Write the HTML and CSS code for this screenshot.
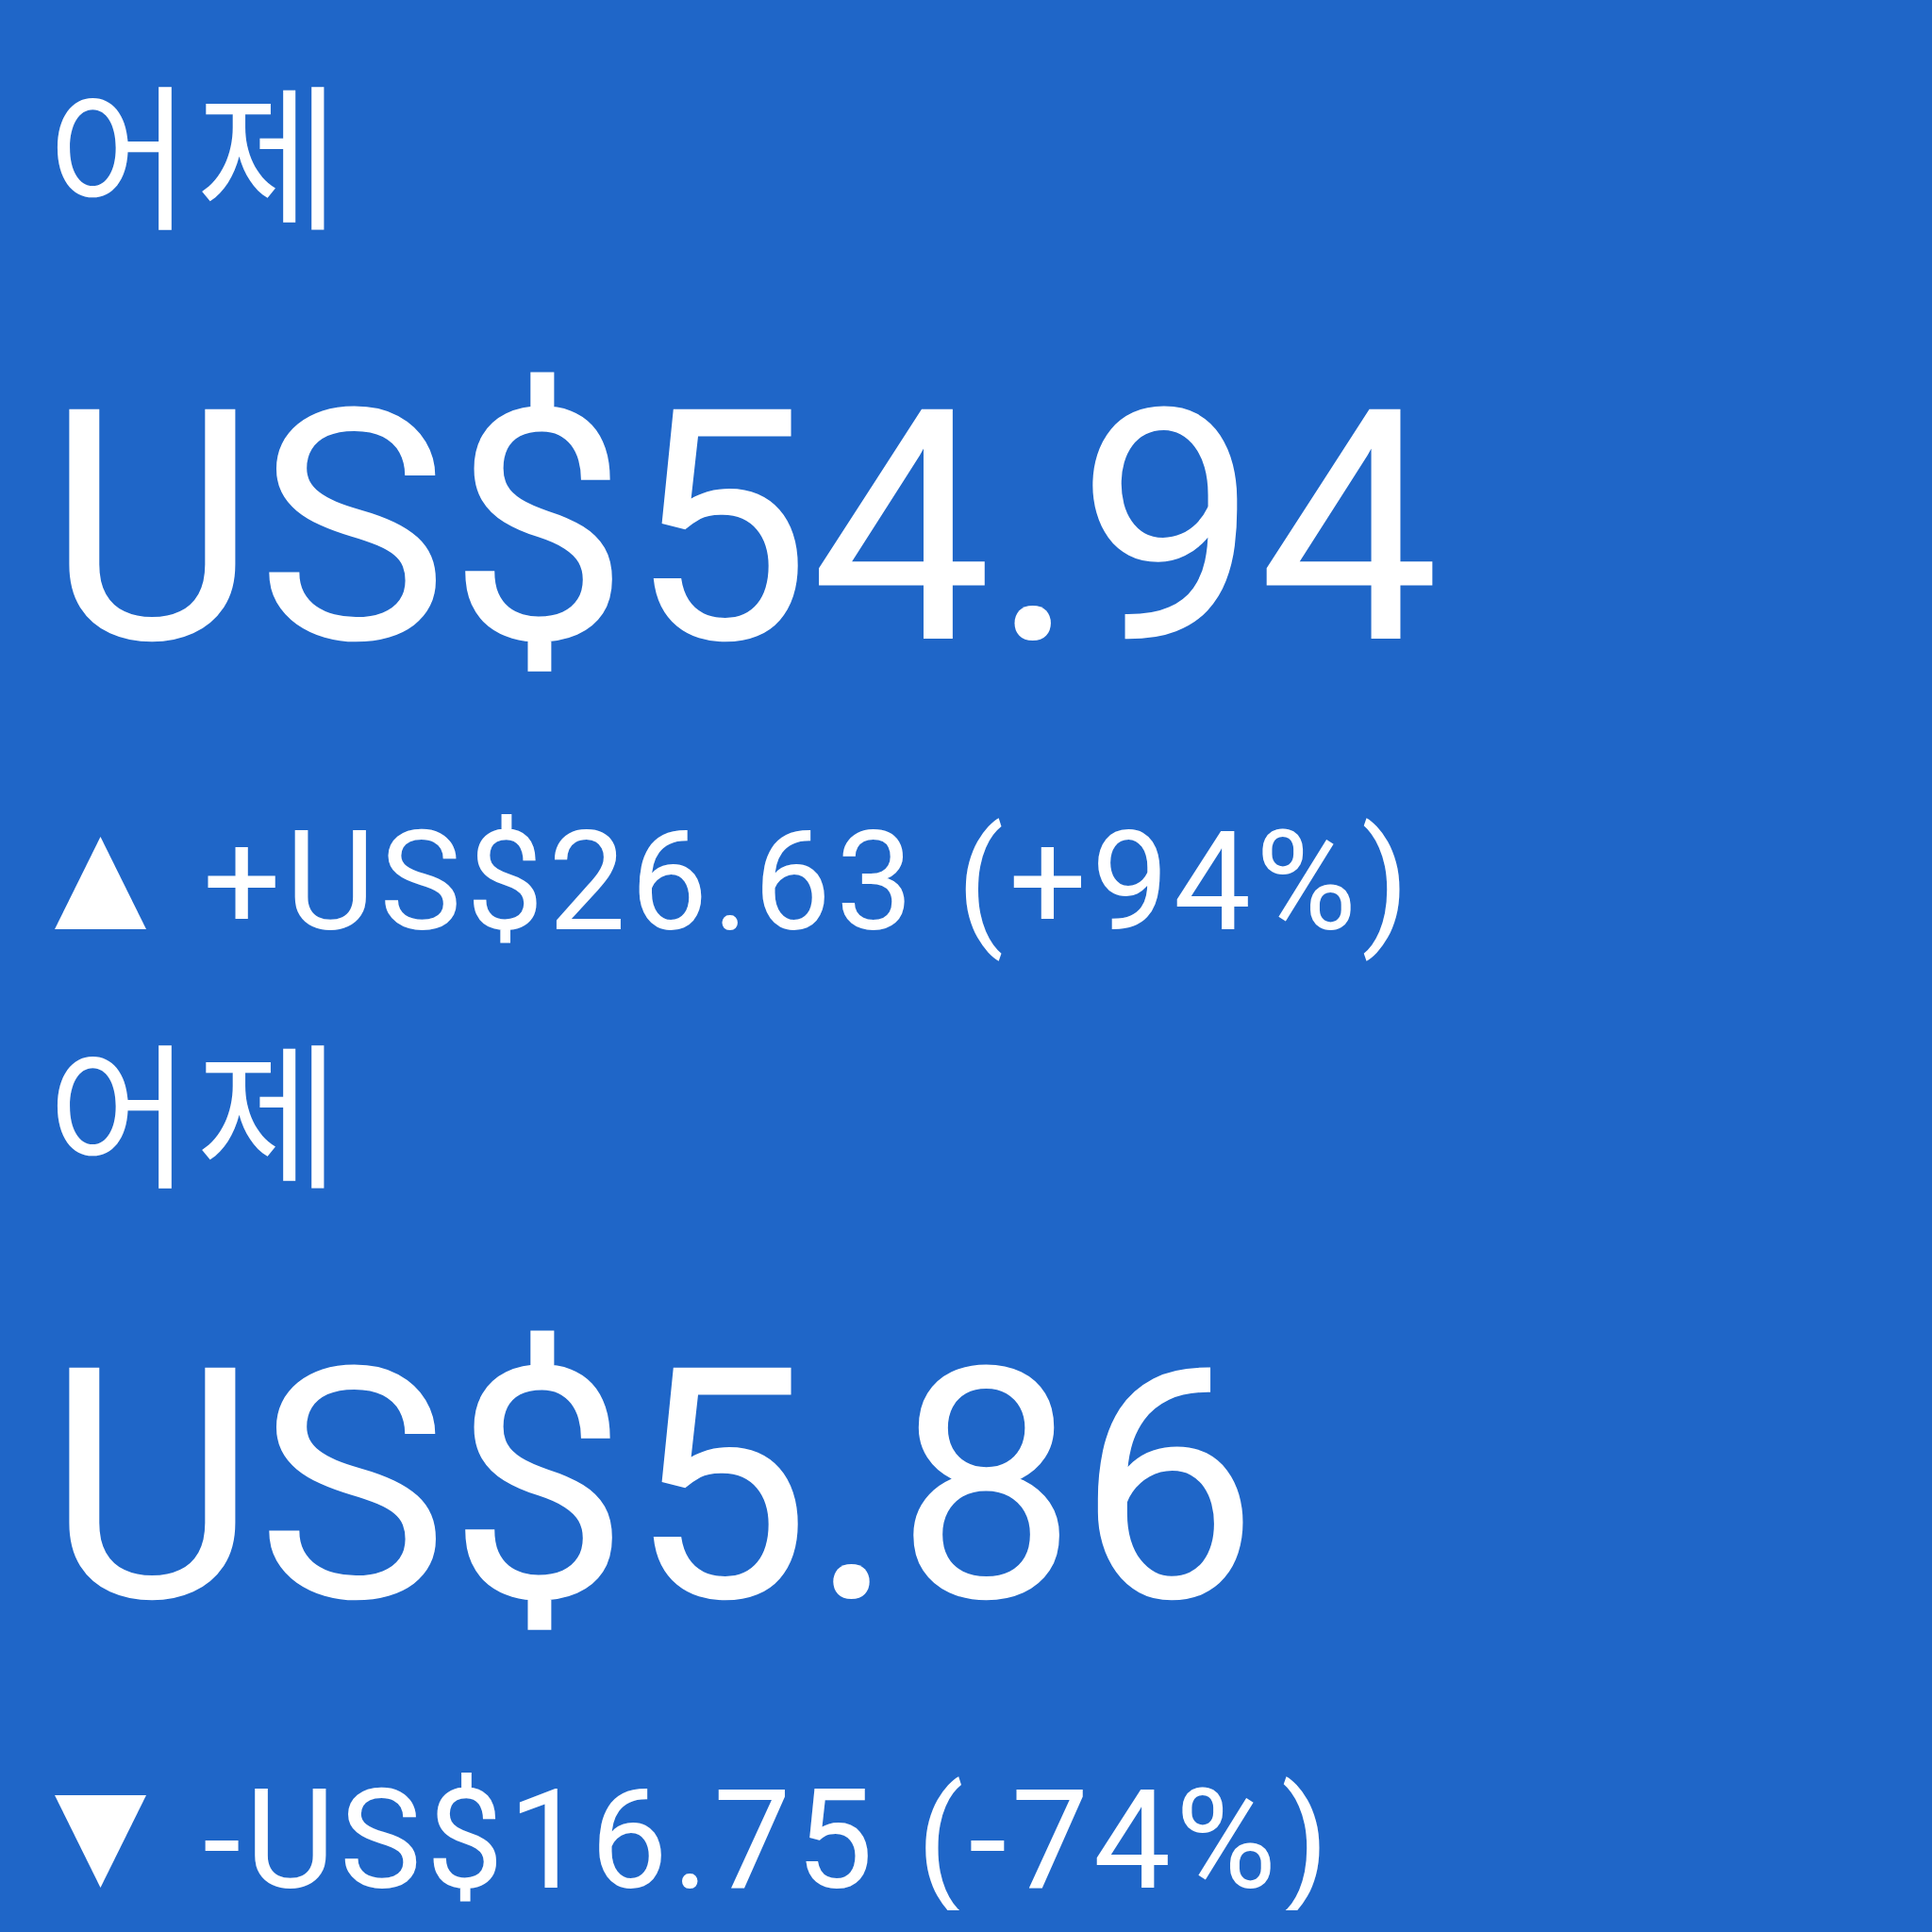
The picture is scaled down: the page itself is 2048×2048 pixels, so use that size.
FILE: index.html
```html
<!DOCTYPE html>
<html><head><title>어제</title>
<meta charset="utf-8">
<link rel="stylesheet" href="styles.css">
</head>
<body>
<div id="board">
  <div class="quote">
    <div class="label">어제</div>
    <div class="price">US$54.94</div>
    <div class="change"><svg class="arrow" viewBox="0 0 97 98"><polygon points="48.5,0 97,98 0,98"/></svg>+US$26.63 (+94%)</div>
  </div>
  <div class="quote">
    <div class="label">어제</div>
    <div class="price">US$5.86</div>
    <div class="change"><svg class="arrow" viewBox="0 0 97 98"><polygon points="0,0 97,0 48.5,98"/></svg>-US$16.75 (-74%)</div>
  </div>
</div>
</body>
</html>
```

FILE: styles.css
```css
body {
    margin: 0;
    background: #1f66c8;
    color: #fff;
    font-family: Roboto, "Noto Sans CJK KR", sans-serif;
}

#board {
    display: flex;
    flex-direction: column;
    gap: 98px;
    padding: 91px 0 0 50px;
}

.quote {
    display: flex;
    flex-direction: column;
}

.label {
    font-size: 166px;
    line-height: 1;
    letter-spacing: 5px;
}

.price {
    font-size: 342px;
    line-height: 1;
    margin-top: 132px;
}

.change {
    font-size: 146px;
    line-height: 1;
    letter-spacing: 5px;
    white-space: nowrap;
    margin-top: 132px;
}

.arrow {
    width: 97px;
    height: 98px;
    margin: 0 60px 0 8px;
    vertical-align: baseline;
    fill: #fff;
}
```
